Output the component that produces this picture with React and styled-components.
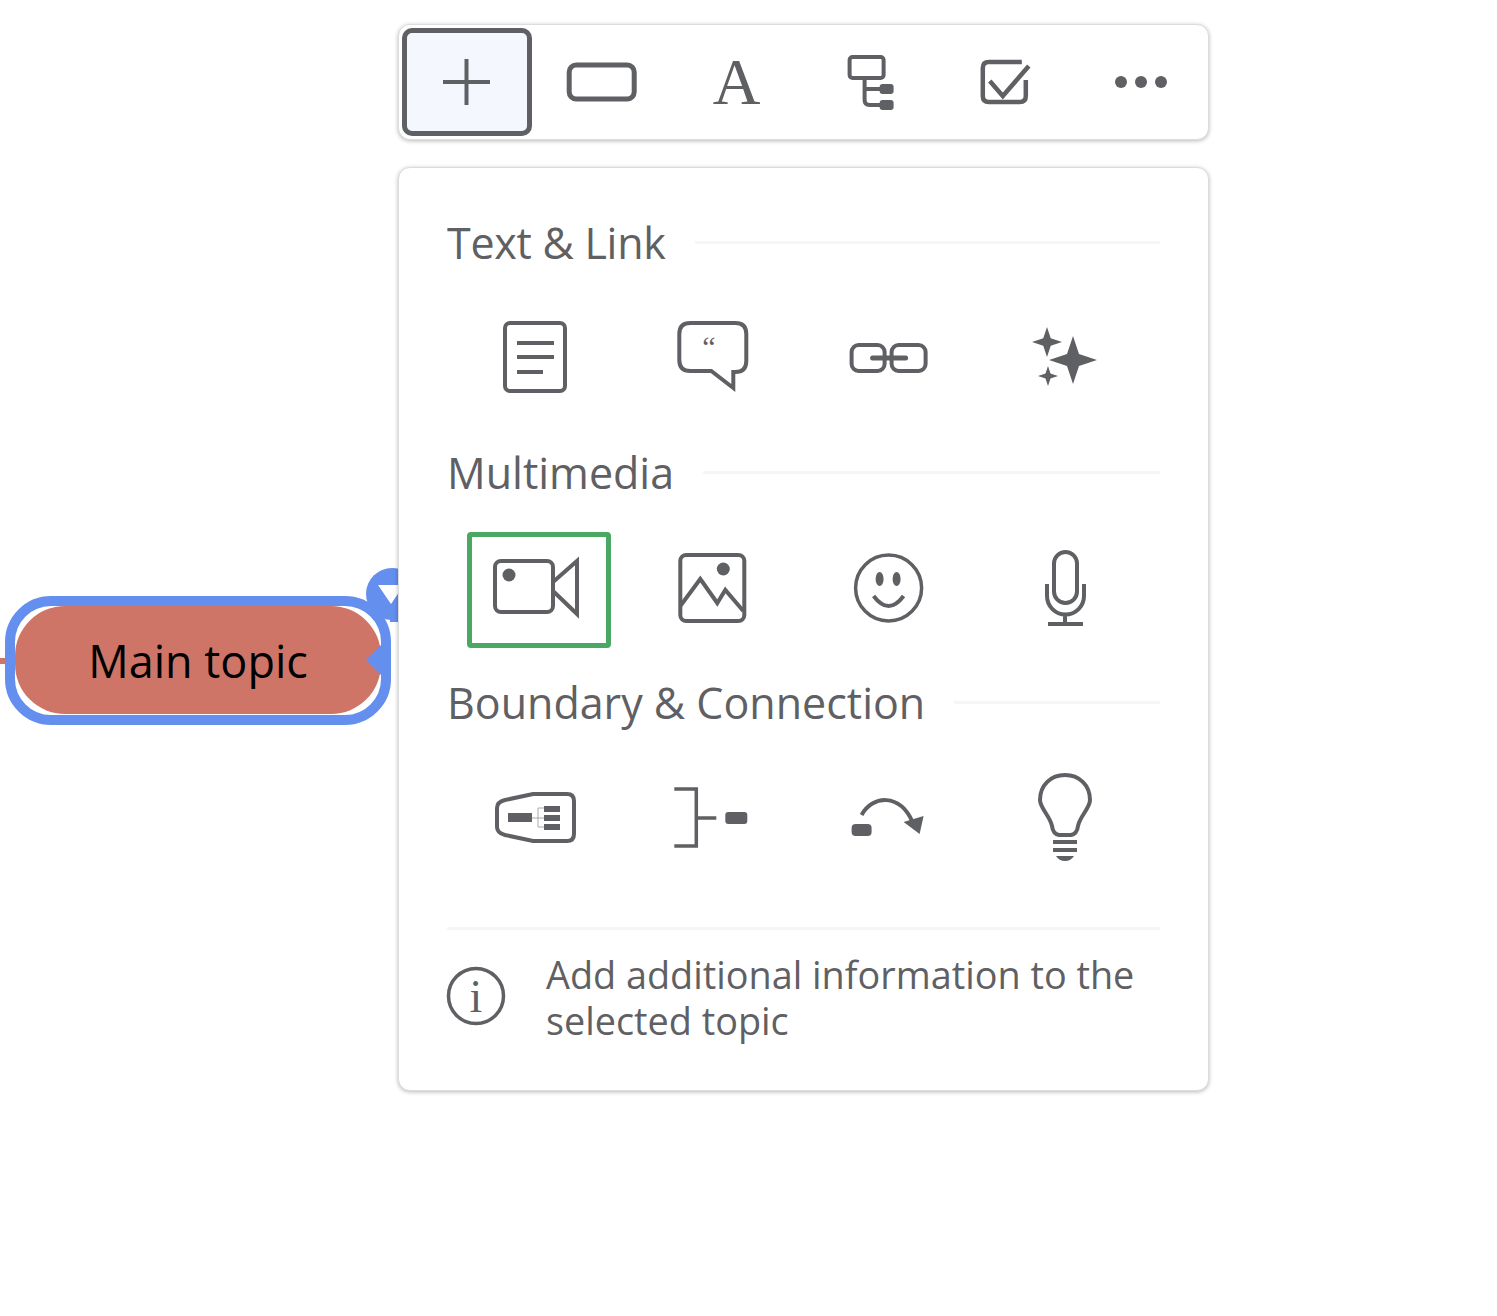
import React from "react";
import styled, { createGlobalStyle } from "styled-components";

const INK = "#5f6063";

const GlobalStyle = createGlobalStyle`
  html, body {
    margin: 0;
    background: #fff;
  }
  body {
    font-family: "Open Sans", "Noto Sans", sans-serif;
    color: ${INK};
  }
`;

const Page = styled.div`
  position: relative;
  width: 1497px;
  height: 1316px;
  overflow: hidden;
  padding: 24px 0 0 398px;
  box-sizing: border-box;
`;

const Stack = styled.div`
  position: relative;
  z-index: 1;
  width: 811px;
  display: flex;
  flex-direction: column;
  gap: 27px;
`;

const Toolbar = styled.div`
  box-sizing: border-box;
  height: 116px;
  display: flex;
  align-items: center;
  gap: 4.8px;
  padding-left: 3px;
  background: #fff;
  border: 1px solid #dcdcdc;
  border-radius: 12px;
  box-shadow: 0 1px 4px rgba(0, 0, 0, 0.28);
`;

const ToolButton = styled.button`
  box-sizing: border-box;
  flex: none;
  width: 130px;
  height: 108px;
  padding: 0;
  display: flex;
  align-items: center;
  justify-content: center;
  color: ${INK};
  background: ${(p) => (p.$active ? "#f4f8fe" : "transparent")};
  border: 5px solid ${(p) => (p.$active ? INK : "transparent")};
  border-radius: 10px;
`;

const LetterA = styled.span`
  font-family: "Liberation Serif", serif;
  font-size: 66px;
  line-height: 66px;
`;

const Panel = styled.div`
  box-sizing: border-box;
  height: 924px;
  padding: 46px 48px 0 48px;
  background: #fff;
  border: 1px solid #dcdcdc;
  border-radius: 12px;
  box-shadow: 0 1px 4px rgba(0, 0, 0, 0.28);
`;

const Section = styled.section`
  height: 230px;
`;

const TitleRow = styled.div`
  height: 60px;
  display: flex;
  align-items: center;
  gap: 29px;
`;

const Title = styled.h3`
  margin: 0 0 2px;
  font-size: 43px;
  font-weight: 400;
  line-height: 58px;
  white-space: nowrap;
  letter-spacing: ${(p) => p.$tracking || 0}px;
`;

const Rule = styled.div`
  flex: 1;
  height: 3px;
  background: #f6f6f6;
  margin-top: -3px;
`;

const IconRow = styled.div`
  display: grid;
  grid-template-columns: repeat(4, 144px);
  column-gap: 32.7px;
  padding: 28px 0 0 20px;
`;

const IconCell = styled.div`
  box-sizing: border-box;
  height: 116px;
  padding: 0 8px 6px 0;
  display: flex;
  align-items: center;
  justify-content: center;
  border: 5px solid ${(p) => (p.$selected ? "#4aa862" : "transparent")};
  border-radius: 4px;
`;

const Glyph = styled.svg`
  flex: none;
  fill: none;
  stroke: ${INK};
  stroke-width: 4;
  overflow: visible;

  .solid {
    fill: ${INK};
    stroke: none;
  }
  text {
    fill: ${INK};
    stroke: none;
    font-family: "Liberation Serif", serif;
  }
`;

const Footer = styled.div`
  margin-top: 23px;
  padding-top: 18px;
  border-top: 3px solid #f6f6f6;
  display: flex;
  align-items: center;
  gap: 41px;
`;

const InfoText = styled.p`
  margin: 0;
  padding-top: 4px;
  font-size: 37.8px;
  line-height: 46px;
`;

/* free canvas behind the panel */
const Topic = styled.div`
  position: absolute;
  left: 5px;
  top: 596px;
  box-sizing: border-box;
  width: 386px;
  height: 129px;
  padding: 0 0 1px 0;
  border: 10px solid #648fef;
  border-radius: 46px;
  background: #fff;
`;

const TopicPill = styled.div`
  height: 100%;
  display: flex;
  align-items: center;
  justify-content: center;
  background: #cf7568;
  border-radius: 50px;
  color: #000;
  font-size: 45px;
`;

const Connector = styled.div`
  position: absolute;
  left: 0;
  top: 658px;
  width: 5px;
  height: 6px;
  background: #cf7568;
`;

const Handles = styled.svg`
  position: absolute;
  left: 360px;
  top: 560px;
  width: 40px;
  height: 120px;
`;

const Doc = () => (
  <>
    <rect x="505" y="323" width="60" height="68" rx="5" />
    <path d="M517 343H554M517 357H554M517 372H543" />
  </>
);

const Bubble = () => (
  <>
    <path d="M690 323H735Q746 323 746 334V361Q746 372 735 372H733V388L711 371H690Q679 371 679 360V334Q679 323 690 323Z" />
    <text x="702" y="357" fontSize="30">“</text>
  </>
);

const Link = () => (
  <>
    <rect x="852" y="345" width="33" height="26" rx="7" />
    <rect x="892" y="345" width="34" height="26" rx="7" />
    <path d="M873 358H906" strokeWidth="5" strokeLinecap="round" />
  </>
);

const star = (x, y, r) => {
  const s = r * 0.25;
  return `M${x} ${y - r}L${x + s} ${y - s}L${x + r} ${y}L${x + s} ${y + s}L${x} ${y + r}L${x - s} ${y + s}L${x - r} ${y}L${x - s} ${y - s}Z`;
};

const Sparkles = () => (
  <>
    <path className="solid" d={star(1073, 360, 24)} />
    <path className="solid" d={star(1047, 342, 15)} />
    <path className="solid" d={star(1048, 376, 10)} />
  </>
);

const Video = () => (
  <>
    <rect x="495" y="561" width="58" height="51" rx="6" />
    <circle className="solid" cx="509" cy="575" r="6.5" />
    <path d="M553 582L577 561V614L553 591" />
  </>
);

const Picture = () => (
  <>
    <rect x="680" y="555" width="64" height="66" rx="6" />
    <circle className="solid" cx="723" cy="569" r="6.5" />
    <path d="M680 606L700 579L717 603L725 590L743 611" />
  </>
);

const Smiley = () => (
  <>
    <circle cx="889" cy="588" r="33" strokeWidth="3.5" />
    <ellipse className="solid" cx="880" cy="579" rx="4" ry="7" />
    <ellipse className="solid" cx="897" cy="579" rx="4" ry="7" />
    <path d="M874 596Q889 616 904 596" />
  </>
);

const Mic = () => (
  <>
    <rect x="1054" y="552" width="23" height="51" rx="11.5" />
    <path d="M1047 584V596A18.5 18.5 0 0 0 1084 596V584M1065 615V624" />
    <path d="M1048 624H1083" />
  </>
);

const Boundary = () => (
  <>
    <path d="M505 800L533 794H567Q574 794 574 801V834Q574 841 567 841H533L505 835Q497 833 497 827V808Q497 802 505 800Z" />
    <path d="M532 818H544M538 808V827M538 808H544M538 827H544" stroke="#aaa" strokeWidth="1" />
    <rect className="solid" x="508" y="813" width="24" height="9" />
    <rect className="solid" x="544" y="806" width="16" height="6" />
    <rect className="solid" x="544" y="815" width="16" height="6" />
    <rect className="solid" x="544" y="824" width="16" height="6" />
  </>
);

const Summary = () => (
  <>
    <path d="M674 789H696V846H674M697 818H716" strokeWidth="3.5" />
    <rect className="solid" x="725" y="812" width="22" height="12" rx="3" />
  </>
);

const Relation = () => (
  <>
    <rect className="solid" x="852" y="824" width="20" height="12" rx="4" />
    <path d="M862 815C873 795 900 793 913 822" />
    <path className="solid" d="M904 822L924 816L920 834Z" />
  </>
);

const Bulb = () => (
  <>
    <path d="M1052 826C1050 816 1040 808 1040 800C1040 785 1051 775 1065 775C1079 775 1090 785 1090 800C1090 808 1080 816 1078 826Q1077 834 1071 835H1059Q1053 834 1052 826Z" />
    <path d="M1053 842H1077M1053 850H1077" />
    <path className="solid" d="M1056 856H1074Q1071 861 1065 861Q1059 861 1056 856Z" />
  </>
);

const sections = [
  { title: "Text & Link", tracking: -0.27, y: 357, icons: [Doc, Bubble, Link, Sparkles] },
  { title: "Multimedia", y: 587, icons: [Video, Picture, Smiley, Mic], selected: 0 },
  { title: "Boundary & Connection", y: 817, icons: [Boundary, Summary, Relation, Bulb] },
];

const columnX = [535, 711.7, 888.4, 1065];

const App = () => {
  return (
    <Page>
      <GlobalStyle />
      <Connector />
      <Topic>
        <TopicPill>Main topic</TopicPill>
      </Topic>
      <Handles viewBox="360 560 40 120">
        <circle cx="392" cy="594" r="26" fill="#648fef" />
        <rect x="390" y="596" width="10" height="26" fill="#648fef" />
        <path d="M378 585L391 604L404 585Z" fill="#fff" />
        <path d="M381 645L366 660L381 675Z" fill="#648fef" />
      </Handles>

      <Stack>
        <Toolbar>
          <ToolButton $active>
            <Glyph width="100" height="80" viewBox="417 42 100 80">
              <path d="M443 82H490M466.500 59V105" />
            </Glyph>
          </ToolButton>
          <ToolButton>
            <Glyph width="100" height="80" viewBox="551.800 42 100 80">
              <rect x="569" y="65" width="65" height="34" rx="7" strokeWidth="5" />
            </Glyph>
          </ToolButton>
          <ToolButton>
            <LetterA>A</LetterA>
          </ToolButton>
          <ToolButton>
            <Glyph width="100" height="80" viewBox="821.400 42 100 80">
              <rect x="850" y="57" width="34" height="21" rx="3" />
              <path d="M865 78V100Q865 105 870 105H882M865 89H882" />
              <rect className="solid" x="880" y="84" width="14" height="10" rx="3" />
              <rect className="solid" x="880" y="100" width="14" height="10" rx="3" />
            </Glyph>
          </ToolButton>
          <ToolButton>
            <Glyph width="100" height="80" viewBox="956.200 42 100 80">
              <path d="M1022 62H989Q983 62 983 68V96Q983 102 989 102H1020Q1026 102 1026 96V80" strokeWidth="4.500" />
              <path d="M990 81L1003 96L1029 66" strokeWidth="4.500" />
            </Glyph>
          </ToolButton>
          <ToolButton>
            <Glyph width="100" height="80" viewBox="1091 42 100 80">
              <circle className="solid" cx="1121" cy="82" r="6" />
              <circle className="solid" cx="1141" cy="82" r="6" />
              <circle className="solid" cx="1161" cy="82" r="6" />
            </Glyph>
          </ToolButton>
        </Toolbar>

        <Panel>
          {sections.map((s) => (
            <Section key={s.title}>
              <TitleRow>
                <Title $tracking={s.tracking}>{s.title}</Title>
                <Rule />
              </TitleRow>
              <IconRow>
                {s.icons.map((Icon, idx) => (
                  <IconCell key={idx} $selected={s.selected === idx}>
                    <Glyph
                      width="100"
                      height="100"
                      viewBox={`${columnX[idx] - 50} ${s.y - 50} 100 100`}
                    >
                      <Icon />
                    </Glyph>
                  </IconCell>
                ))}
              </IconRow>
            </Section>
          ))}
          <Footer>
            <Glyph width="58" height="58" viewBox="448 967 58 58">
              <circle cx="477" cy="996" r="27.500" strokeWidth="3.500" />
              <text x="477" y="1012" fontSize="46" textAnchor="middle">i</text>
            </Glyph>
            <InfoText>
              Add additional information to the
              <br />
              selected topic
            </InfoText>
          </Footer>
        </Panel>
      </Stack>
    </Page>
  );
};

export default App;
